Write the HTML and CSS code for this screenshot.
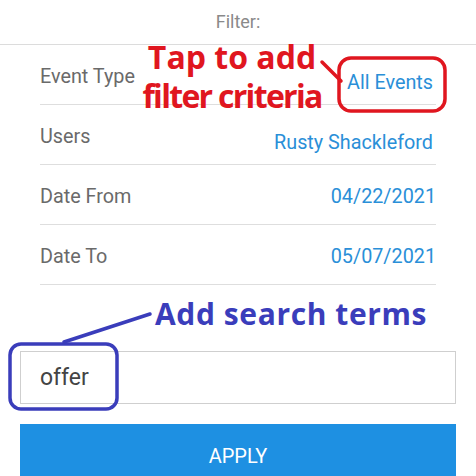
FILE: index.html
```html
<!DOCTYPE html>
<html>

<head>
    <title>Filter</title>
    <link rel="stylesheet" href="styles.css">
</head>

<body>
    <div class="screen">
        <header class="title-bar">Filter:</header>

        <div class="filter-list">
            <div class="filter-row">
                <span class="label">Event Type</span>
                <span class="value low">All Events</span>
            </div>
            <div class="filter-row">
                <span class="label">Users</span>
                <span class="value low">Rusty Shackleford</span>
            </div>
            <div class="filter-row">
                <span class="label">Date From</span>
                <span class="value">04/22/2021</span>
            </div>
            <div class="filter-row">
                <span class="label">Date To</span>
                <span class="value">05/07/2021</span>
            </div>
        </div>

        <div class="search-box">
            <input type="text" class="search-input" value="offer">
        </div>

        <button class="apply-button">APPLY</button>

        <!-- callouts drawn over the screenshot -->
        <div class="note note-red">Tap to add<br><span class="tight">filter criteria</span></div>
        <div class="note note-blue">Add search terms</div>
        <svg class="callouts" width="476" height="476" viewBox="0 0 476 476">
            <rect x="339" y="58" width="106" height="53" rx="12" fill="none" stroke="#e0161f" stroke-width="3.5" />
            <line x1="322" y1="62" x2="341" y2="81" stroke="#e0161f" stroke-width="3.5" stroke-linecap="round" />
            <rect x="10" y="344" width="107" height="65" rx="11" fill="none" stroke="#3a3dbb" stroke-width="3.5" />
            <line x1="64" y1="342" x2="150" y2="314" stroke="#3a3dbb" stroke-width="3.5" stroke-linecap="round" />
        </svg>
    </div>
</body>

</html>
```

FILE: styles.css
```css
body {
    margin: 0;
    padding: 0;
    background-color: #fff;
    font-family: Roboto, "Noto Sans", sans-serif;
}

.screen {
    position: relative;
    width: 476px;
    height: 476px;
    overflow: hidden;
}

.title-bar {
    height: 44px;
    line-height: 44px;
    text-align: center;
    font-size: 18px;
    color: #8a8a8a;
    border-bottom: 1px solid #dcdcdc;
}

.filter-list {
    margin: 0 40px;
}

.filter-row {
    height: 59px;
    display: flex;
    justify-content: space-between;
    align-items: center;
    border-bottom: 1px solid #dedede;
    font-size: 19.8px;
}

.label {
    color: #6a6a6a;
    margin-top: 3px;
}

.value {
    color: #2a8fd8;
    margin-top: 3px;
}

.value.low {
    margin-top: 15px;
    margin-right: 3px;
}

.search-box {
    margin: 66px 20px 0;
}

.search-input {
    box-sizing: border-box;
    width: 100%;
    height: 53px;
    border: 1px solid #cfcfcf;
    padding: 0 19px;
    font-family: Roboto, sans-serif;
    font-size: 23px;
    color: #444;
    outline: none;
}

.apply-button {
    display: block;
    box-sizing: border-box;
    width: 436px;
    height: 60px;
    margin: 20px 20px 0;
    border: none;
    background-color: #1e90e2;
    color: #fff;
    font-family: Roboto, sans-serif;
    font-size: 20px;
    padding-top: 4px;
}

/* annotations */
.note {
    position: absolute;
    font-family: "Open Sans", "DejaVu Sans", sans-serif;
    font-weight: bold;
    text-align: center;
    white-space: nowrap;
}

.note-red {
    left: 132px;
    top: 37px;
    width: 200px;
    font-size: 32px;
    line-height: 39px;
    color: #e0161f;
}

.note-red .tight {
    letter-spacing: -1.7px;
}

.note-blue {
    left: 155px;
    top: 294px;
    font-size: 30px;
    line-height: 40px;
    letter-spacing: 0.6px;
    color: #3a3dbb;
}

.callouts {
    position: absolute;
    left: 0;
    top: 0;
    pointer-events: none;
}
```
